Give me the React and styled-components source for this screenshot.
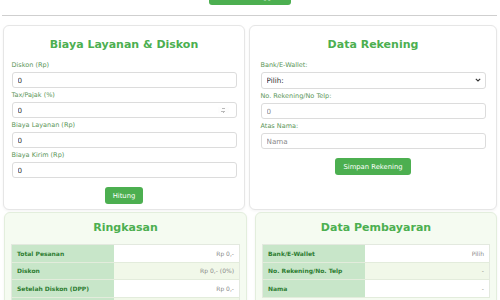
import React from 'react'
import styled, { createGlobalStyle } from 'styled-components'

const GlobalStyle = createGlobalStyle`
  html, body {
    margin: 0;
    padding: 0;
    background: #fff;
    font-family: "DejaVu Sans", Verdana, sans-serif;
    overflow: hidden;
  }
`

const summary = [
  { label: 'Total Pesanan', value: 'Rp 0,-' },
  { label: 'Diskon', value: 'Rp 0,- (0%)' },
  { label: 'Setelah Diskon (DPP)', value: 'Rp 0,-' },
  { label: 'Tax/Pajak', value: 'Rp 0,- (0%)' }
]

const payment = [
  { label: 'Bank/E-Wallet', value: 'Pilih' },
  { label: 'No. Rekening/No. Telp', value: '-' },
  { label: 'Nama', value: '-' }
]

const Chevron = () => (
  <svg width="6" height="4" viewBox="0 0 6 4" fill="none">
    <path d="M0.8 0.8 L3 3 L5.2 0.8" stroke="#333" strokeWidth="1.1" />
  </svg>
)

const App = () => (
  <Page>
    <GlobalStyle />
    <TopBar>
      <Button>+ Tambah Anggota</Button>
    </TopBar>
    <Divider />
    <TopRow>
      <Card>
        <Title>Biaya Layanan &amp; Diskon</Title>
        <Form>
          <Label>Diskon (Rp)</Label>
          <Input defaultValue="0" />
          <Label>Tax/Pajak (%)</Label>
          <Input type="number" defaultValue="0" />
          <Label>Biaya Layanan (Rp)</Label>
          <Input defaultValue="0" />
          <Label>Biaya Kirim (Rp)</Label>
          <Input defaultValue="0" />
          <Actions>
            <Button>Hitung</Button>
          </Actions>
        </Form>
      </Card>
      <Card>
        <Title>Data Rekening</Title>
        <Form>
          <Label>Bank/E-Wallet:</Label>
          <SelectWrap>
            <Select defaultValue="">
              <option value="">Pilih:</option>
            </Select>
            <SelectIcon>
              <Chevron />
            </SelectIcon>
          </SelectWrap>
          <Label>No. Rekening/No Telp:</Label>
          <Input placeholder="0" />
          <Label>Atas Nama:</Label>
          <Input placeholder="Nama" />
          <Actions>
            <Button>Simpan Rekening</Button>
          </Actions>
        </Form>
      </Card>
    </TopRow>
    <BottomRow>
      <SummaryCard>
        <Title>Ringkasan</Title>
        <Table>
          <tbody>
            {summary.map((row) => (
              <tr key={row.label}>
                <Th>{row.label}</Th>
                <Td>{row.value}</Td>
              </tr>
            ))}
          </tbody>
        </Table>
      </SummaryCard>
      <SummaryCard>
        <Title>Data Pembayaran</Title>
        <Table>
          <tbody>
            {payment.map((row) => (
              <tr key={row.label}>
                <Th>{row.label}</Th>
                <Td>{row.value}</Td>
              </tr>
            ))}
          </tbody>
        </Table>
      </SummaryCard>
    </BottomRow>
  </Page>
)

const Page = styled.div`
  width: 500px;
  height: 300px;
  overflow: hidden;
`

const TopBar = styled.div`
  display: flex;
  justify-content: center;
  margin-top: -12px;
`

const Divider = styled.hr`
  margin: 10px 3px 9px 2px;
  border: none;
  border-top: 1px solid #cfcfcf;
`

const TopRow = styled.div`
  display: grid;
  grid-template-columns: 242px 1fr;
  gap: 4px;
  padding: 0 3px;
`

const BottomRow = styled.div`
  display: grid;
  grid-template-columns: 243px 1fr;
  gap: 8px;
  padding: 0 3px 0 4px;
  margin-top: 2px;
`

const Card = styled.div`
  background: #fff;
  border: 1px solid #e6e6e6;
  border-radius: 6px;
  box-shadow: 0 1px 3px rgba(0, 0, 0, 0.05);
  padding: 12px 0 6px;
  height: 185px;
  box-sizing: border-box;
`

const SummaryCard = styled(Card)`
  background: #f5fbf1;
  border-color: #e3eedd;
  padding: 8px 6px 8px;
  height: 120px;
`

const Title = styled.h2`
  margin: 0 0 9px;
  text-align: center;
  font-size: 11px;
  line-height: 14px;
  font-weight: bold;
  color: #4caf50;
`

const Form = styled.div`
  width: 225px;
  margin: 0 auto;
  display: flex;
  flex-direction: column;
`

const Label = styled.label`
  font-size: 6.5px;
  line-height: 9px;
  color: #5a9558;
  margin-bottom: 2px;
`

const Input = styled.input`
  box-sizing: border-box;
  height: 16px;
  margin: 0 0 3px;
  padding: 0 5px;
  border: 1px solid #dcdcdc;
  border-radius: 3px;
  font-family: "DejaVu Sans", sans-serif;
  font-size: 7.2px;
  color: #333;
  outline: none;

  &::placeholder {
    color: #8a8a8a;
  }

  &::-webkit-inner-spin-button {
    opacity: 0.6;
    height: 9px;
    transform: scale(0.7);
  }
`

const SelectWrap = styled.div`
  position: relative;
  display: flex;
  flex-direction: column;
  margin: 0 0 3px;
`

const Select = styled.select`
  box-sizing: border-box;
  height: 17px;
  padding: 0 5px;
  border: 1px solid #dcdcdc;
  border-radius: 3px;
  background: #fff;
  appearance: none;
  font-family: "DejaVu Sans", sans-serif;
  font-size: 7.2px;
  color: #333;
`

const SelectIcon = styled.span`
  position: absolute;
  right: 5px;
  top: 6px;
  display: flex;
  pointer-events: none;
`

const Actions = styled.div`
  display: flex;
  justify-content: center;
  margin-top: 6px;
`

const Button = styled.button`
  height: 17px;
  padding: 0 8px;
  border: none;
  border-radius: 3px;
  background: #4caf50;
  color: #fff;
  font-family: "DejaVu Sans", sans-serif;
  font-size: 6.8px;
`

const Table = styled.table`
  width: 100%;
  border-collapse: collapse;
  border: 1px solid #e3e9df;
  font-size: 6px;

  tr:nth-child(even) td {
    background: #f1f8e9;
  }
`

const Th = styled.th`
  width: 45%;
  height: 16.5px;
  padding: 0 5px;
  text-align: left;
  background: #c8e6c9;
  color: #2e7d32;
  font-weight: bold;
  border-bottom: 1px solid #e3ecdc;
`

const Td = styled.td`
  padding: 0 5px;
  text-align: right;
  background: #fff;
  color: #8a8a8a;
  border-bottom: 1px solid #e3ecdc;
`

export default App
